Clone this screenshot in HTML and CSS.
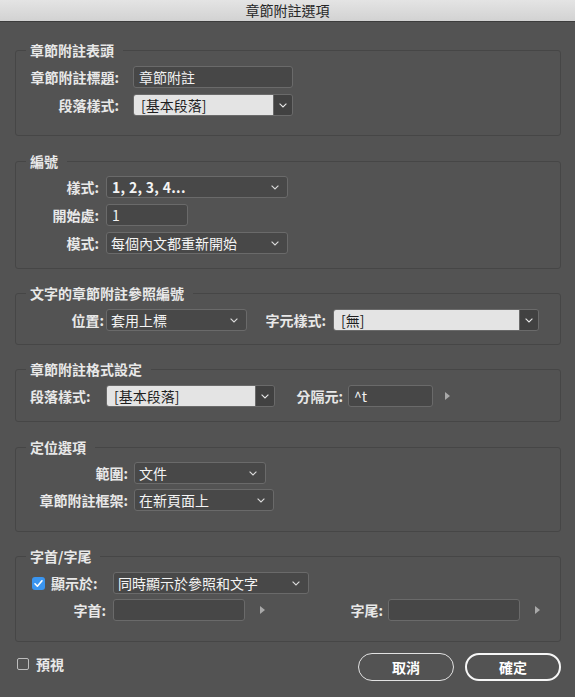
FILE: index.html
```html
<!DOCTYPE html>
<html lang="zh-Hant">
<head>
<meta charset="utf-8">
<title>章節附註選項</title>
<link rel="stylesheet" href="styles.css">
</head>
<body>
<div class="dialog">
  <div class="titlebar">章節附註選項</div>

  <fieldset class="sec sec1">
    <legend>章節附註表頭</legend>
    <div class="row">
      <span class="lbl">章節附註標題:</span>
      <div class="field w160">章節附註</div>
    </div>
    <div class="row">
      <span class="lbl">段落樣式:</span>
      <div class="combo w160"><span class="combo-text">[基本段落]</span><span class="combo-btn"><svg width="8" height="5" viewBox="0 0 8 5"><path d="M0.6 0.6 L4 4 L7.4 0.6" fill="none" stroke="#e6e6e6" stroke-width="1.1"/></svg></span></div>
    </div>
  </fieldset>

  <fieldset class="sec sec2">
    <legend>編號</legend>
    <div class="row">
      <span class="lbl">樣式:</span>
      <div class="select w182"><span class="sel-text num">1, 2, 3, 4...</span><svg class="chev" width="8" height="5" viewBox="0 0 8 5"><path d="M0.6 0.6 L4 4 L7.4 0.6" fill="none" stroke="#dcdcdc" stroke-width="1.1"/></svg></div>
    </div>
    <div class="row">
      <span class="lbl">開始處:</span>
      <div class="field w82">1</div>
    </div>
    <div class="row">
      <span class="lbl">模式:</span>
      <div class="select w182"><span class="sel-text">每個內文都重新開始</span><svg class="chev" width="8" height="5" viewBox="0 0 8 5"><path d="M0.6 0.6 L4 4 L7.4 0.6" fill="none" stroke="#dcdcdc" stroke-width="1.1"/></svg></div>
    </div>
  </fieldset>

  <fieldset class="sec sec3">
    <legend>文字的章節附註參照編號</legend>
    <div class="row">
      <span class="lbl">位置:</span>
      <div class="select w141"><span class="sel-text">套用上標</span><svg class="chev" width="8" height="5" viewBox="0 0 8 5"><path d="M0.6 0.6 L4 4 L7.4 0.6" fill="none" stroke="#dcdcdc" stroke-width="1.1"/></svg></div>
      <span class="lbl lbl2">字元樣式:</span>
      <div class="combo w206"><span class="combo-text">[無]</span><span class="combo-btn"><svg width="8" height="5" viewBox="0 0 8 5"><path d="M0.6 0.6 L4 4 L7.4 0.6" fill="none" stroke="#e6e6e6" stroke-width="1.1"/></svg></span></div>
    </div>
  </fieldset>

  <fieldset class="sec sec4">
    <legend>章節附註格式設定</legend>
    <div class="row">
      <span class="lbl">段落樣式:</span>
      <div class="combo w169"><span class="combo-text">[基本段落]</span><span class="combo-btn"><svg width="8" height="5" viewBox="0 0 8 5"><path d="M0.6 0.6 L4 4 L7.4 0.6" fill="none" stroke="#e6e6e6" stroke-width="1.1"/></svg></span></div>
      <span class="lbl lbl2">分隔元:</span>
      <div class="field w85">^t</div>
      <span class="tri"></span>
    </div>
  </fieldset>

  <fieldset class="sec sec5">
    <legend>定位選項</legend>
    <div class="row">
      <span class="lbl">範圍:</span>
      <div class="select w132"><span class="sel-text">文件</span><svg class="chev" width="8" height="5" viewBox="0 0 8 5"><path d="M0.6 0.6 L4 4 L7.4 0.6" fill="none" stroke="#dcdcdc" stroke-width="1.1"/></svg></div>
    </div>
    <div class="row">
      <span class="lbl">章節附註框架:</span>
      <div class="select w140"><span class="sel-text">在新頁面上</span><svg class="chev" width="8" height="5" viewBox="0 0 8 5"><path d="M0.6 0.6 L4 4 L7.4 0.6" fill="none" stroke="#dcdcdc" stroke-width="1.1"/></svg></div>
    </div>
  </fieldset>

  <fieldset class="sec sec6">
    <legend>字首/字尾</legend>
    <div class="row row-check">
      <span class="check checked"><svg width="13" height="13" viewBox="0 0 13 13"><path d="M3 6.8 L5.4 9.2 L10 3.8" fill="none" stroke="#ffffff" stroke-width="1.6" stroke-linecap="round" stroke-linejoin="round"/></svg></span>
      <span class="lbl lbl-check">顯示於:</span>
      <div class="select w196"><span class="sel-text">同時顯示於參照和文字</span><svg class="chev" width="8" height="5" viewBox="0 0 8 5"><path d="M0.6 0.6 L4 4 L7.4 0.6" fill="none" stroke="#dcdcdc" stroke-width="1.1"/></svg></div>
    </div>
    <div class="row">
      <span class="lbl">字首:</span>
      <div class="field w132"></div>
      <span class="tri"></span>
      <span class="lbl lbl2">字尾:</span>
      <div class="field w132"></div>
      <span class="tri"></span>
    </div>
  </fieldset>

  <div class="footer">
    <label class="preview"><span class="check unchecked"></span><span class="preview-text">預視</span></label>
    <div class="buttons">
      <span class="btn">取消</span>
      <span class="btn btn-default">確定</span>
    </div>
  </div>
</div>
</body>
</html>
```

FILE: styles.css
```css
* { box-sizing: border-box; }

html, body {
  margin: 0;
  padding: 0;
  background: #535353;
}

body {
  font-family: "Noto Sans CJK TC", "Noto Sans", "Liberation Sans", sans-serif;
  font-size: 14px;
  color: #e8e8e8;
}

.dialog {
  width: 575px;
  height: 697px;
  background: #535353;
  display: flex;
  flex-direction: column;
  overflow: hidden;
}

.titlebar {
  height: 22px;
  flex: 0 0 22px;
  background: linear-gradient(#e4e4e4, #d2d2d2);
  border-bottom: 1px solid #3c3c3c;
  color: #262626;
  font-size: 14px;
  line-height: 21px;
  text-align: center;
}

/* ---------- group boxes ---------- */
.sec {
  margin: 15px 14px 0 15px;
  padding: 0;
  border: 1px solid #464646;
  border-radius: 3px;
  min-width: 0;
  display: flex;
  flex-direction: column;
  gap: 6px;
}

.sec legend {
  margin-left: 10px;
  padding: 0 9px 0 4px;
  font-weight: bold;
  line-height: 18px;
  color: #e8e8e8;
}

.sec1 { margin-top: 19px; padding-top: 7px; padding-bottom: 19px; }
.sec2 { margin-top: 16px; padding-top: 6px; padding-bottom: 14px; }
.sec3 { padding-top: 7px; padding-bottom: 13px; }
.sec4 { padding-top: 7px; padding-bottom: 14px; }
.sec5 { margin-top: 16px; padding-top: 6px; padding-bottom: 20px; gap: 5px; }
.sec6 { padding-top: 7px; padding-bottom: 20px; gap: 5px; }

.row {
  display: flex;
  align-items: center;
  height: 22px;
}

.lbl {
  font-weight: bold;
  line-height: 22px;
  text-align: right;
  white-space: nowrap;
  color: #e8e8e8;
  flex: none;
}

.sec1 .lbl { width: 103px; margin-right: 14px; }
.sec2 .lbl { width: 83px; margin-right: 7px; }
.sec3 .lbl { width: 88px; margin-right: 2px; }
.sec3 .lbl2 { width: 79px; margin-right: 7px; }
.sec4 .row { padding-left: 14px; }
.sec4 .lbl { width: 76px; text-align: left; }
.sec4 .lbl2 { width: 68px; margin-right: 5px; text-align: right; }
.sec5 .lbl { width: 112px; margin-right: 6px; }
.sec6 .lbl { width: 90px; margin-right: 7px; }
.sec6 .lbl2 { width: 118px; margin-right: 5px; }
.sec6 .row-check { padding-left: 16px; }
.sec6 .lbl-check { width: 62px; margin-right: 0; text-align: left; }

/* ---------- widths ---------- */
.w82 { width: 82px; }
.w85 { width: 85px; }
.w132 { width: 132px; }
.w140 { width: 140px; }
.w141 { width: 141px; }
.w160 { width: 160px; }
.w169 { width: 169px; }
.w182 { width: 182px; }
.w196 { width: 196px; }
.w206 { width: 206px; }

/* ---------- controls ---------- */
.field {
  height: 22px;
  flex: none;
  background: #474747;
  border: 1px solid #6a6a6a;
  border-radius: 3px;
  color: #f2f2f2;
  line-height: 20px;
  padding-left: 5px;
  white-space: nowrap;
  overflow: hidden;
}

.select {
  height: 22px;
  flex: none;
  display: flex;
  align-items: center;
  justify-content: space-between;
  background: #484848;
  border: 1px solid #6a6a6a;
  border-radius: 3px;
  padding: 0 8px 0 4px;
  color: #f4f4f4;
}

.sel-text {
  line-height: 20px;
  white-space: nowrap;
}

.num {
  font-weight: bold;
  letter-spacing: 0.3px;
  padding-left: 1px;
}

.chev { flex: none; }

.combo {
  height: 22px;
  flex: none;
  display: flex;
  border: 1px solid #6a6a6a;
  border-radius: 3px;
  overflow: hidden;
}

.combo-text {
  flex: 1;
  background: #e4e4e4;
  color: #1e1e1e;
  line-height: 20px;
  padding-left: 7px;
  white-space: nowrap;
}

.combo-btn {
  width: 19px;
  flex: none;
  background: #414141;
  border-left: 1px solid #6a6a6a;
  display: flex;
  align-items: center;
  justify-content: center;
}

.tri {
  flex: none;
  width: 0;
  height: 0;
  margin-left: 12px;
  border-top: 4px solid transparent;
  border-bottom: 4px solid transparent;
  border-left: 5px solid #a9a9a9;
}

.sec6 .tri { margin-left: 15px; }

.check {
  flex: none;
  width: 13px;
  height: 13px;
  border-radius: 3px;
  margin-right: 6px;
  display: inline-flex;
}

.checked {
  background: #3a95f0;
}

.unchecked {
  width: 12px;
  height: 12px;
  border: 1px solid #bdbdbd;
  border-radius: 2px;
  margin-right: 7px;
}

/* ---------- footer ---------- */
.footer {
  margin-top: 11px;
  padding: 0 14px 0 17px;
  display: flex;
  justify-content: space-between;
  align-items: flex-start;
}

.preview {
  display: flex;
  align-items: center;
  margin-top: 5px;
  height: 12px;
}

.preview-text {
  font-weight: bold;
  color: #e8e8e8;
  line-height: 12px;
}

.buttons {
  display: flex;
  gap: 11px;
}

.btn {
  width: 96px;
  height: 28px;
  border: 1.5px solid #e2e2e2;
  border-radius: 14px;
  color: #ffffff;
  font-weight: bold;
  display: flex;
  align-items: center;
  justify-content: center;
}

.btn-default {
  border: 2px solid #f6f6f6;
}
```
